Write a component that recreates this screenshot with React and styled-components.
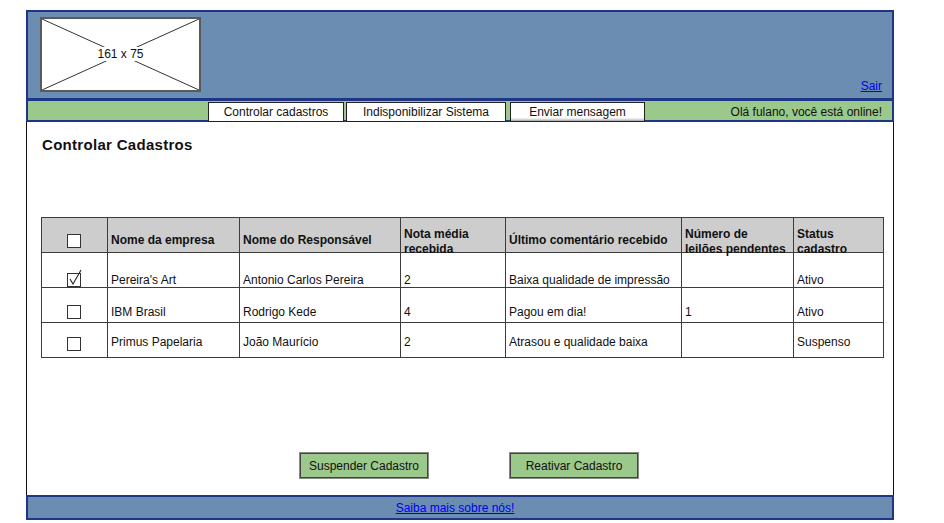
import React from 'react';
import styled, { createGlobalStyle } from 'styled-components';

const GlobalStyle = createGlobalStyle`
  body {
    margin: 0;
    background: #ffffff;
    font-family: 'Liberation Sans', Arial, sans-serif;
    font-size: 12px;
    color: #111;
  }
`;

const COLORS = {
  blue: '#6b8db2',
  navy: '#1d3686',
  green: '#9bc88b',
  gray: '#cdcdcd',
  line: '#3c3c3c',
  link: '#0000ee',
};

const Page = styled.div`
  width: 868px;
  margin: 10px 0 0 26px;
  display: flex;
  flex-direction: column;
`;

const Header = styled.header`
  height: 89px;
  box-sizing: border-box;
  background: ${COLORS.blue};
  border: 2px solid ${COLORS.navy};
  border-bottom-width: 1px;
  display: flex;
  justify-content: space-between;
  align-items: flex-start;
  padding: 5px 10px 0 12px;
`;

const LinkText = styled.a`
  color: ${COLORS.link};
  text-decoration: underline;
  cursor: pointer;
`;

const Logout = styled(LinkText)`
  align-self: flex-end;
  margin-bottom: 5px;
`;

const Placeholder = styled.div`
  position: relative;
  width: 161px;
  height: 75px;
  box-sizing: border-box;
  background: #fff;
  border: 2px solid #5a5a5a;
  display: flex;
  align-items: center;
  justify-content: center;
  svg {
    position: absolute;
    inset: 0;
  }
`;

const PlaceholderLabel = styled.span`
  position: relative;
  background: #fff;
  padding: 0 2px;
  margin-top: -2px;
`;

const Nav = styled.nav`
  height: 23px;
  box-sizing: border-box;
  background: ${COLORS.green};
  border: 2px solid ${COLORS.navy};
  display: flex;
  align-items: flex-end;
  padding-left: 180px;
  padding-right: 10px;
`;

const NavButton = styled.button`
  height: 20px;
  margin: 0 0 -2px ${({ $gap }) => $gap}px;
  box-sizing: border-box;
  width: ${({ $w }) => $w}px;
  background: #fff;
  border: 1px solid #222;
  font-family: inherit;
  font-size: 12px;
  color: #111;
  padding: 0;
  box-shadow: ${({ $active }) => ($active ? 'inset 0 -3px 3px -2px #888' : 'none')};
`;

const Greeting = styled.span`
  margin-left: auto;
  align-self: center;
  margin-top: 3px;
`;

const Content = styled.main`
  height: 373px;
  box-sizing: border-box;
  border-left: 1px solid #111;
  border-right: 1px solid #111;
  padding: 14px 10px 0 14px;
  display: flex;
  flex-direction: column;
`;

const Title = styled.h1`
  margin: 0 0 0 1px;
  font-size: 15px;
  font-weight: bold;
  letter-spacing: 0.3px;
`;

const Table = styled.table`
  margin-top: 64px;
  width: 842px;
  border-collapse: collapse;
  table-layout: fixed;
`;

const Th = styled.th`
  background: ${COLORS.gray};
  border: 1px solid ${COLORS.line};
  padding: 0;
  text-align: left;
  font-weight: bold;
  vertical-align: top;
`;

const ThInner = styled.div`
  height: 34px;
  box-sizing: border-box;
  display: flex;
  align-items: ${({ $two }) => ($two ? 'flex-start' : 'flex-end')};
  justify-content: ${({ $center }) => ($center ? 'center' : 'flex-start')};
  padding: ${({ $two }) => ($two ? '9px 3px 0' : '0 3px 4px')};
  line-height: 15px;
`;

const Td = styled.td`
  border: 1px solid ${COLORS.line};
  padding: 0;
  vertical-align: top;
`;

const TdInner = styled.div`
  height: 34px;
  box-sizing: border-box;
  padding: ${({ $top }) => $top}px 3px 0;
  line-height: 14px;
  display: flex;
  justify-content: ${({ $center }) => ($center ? 'center' : 'flex-start')};
`;

const Box = styled.span`
  position: relative;
  display: inline-block;
  width: 14px;
  height: 14px;
  box-sizing: border-box;
  border: 1px solid #333;
  background: #fff;
  margin-left: -1px;
  svg {
    position: absolute;
    left: 1px;
    top: -5px;
  }
`;

const Actions = styled.div`
  margin-top: 95px;
  display: flex;
  gap: 82px;
  padding-left: 259px;
`;

const ActionButton = styled.button`
  width: 128px;
  height: 25px;
  box-sizing: border-box;
  background: ${COLORS.green};
  border: 1px solid #444;
  box-shadow: 0 0 0 1px #888;
  font-family: inherit;
  font-size: 12px;
  color: #111;
`;

const Footer = styled.footer`
  height: 25px;
  box-sizing: border-box;
  background: ${COLORS.blue};
  border: 2px solid ${COLORS.navy};
  display: flex;
  align-items: center;
  justify-content: center;
  padding-right: 10px;
`;

const Check = ({ checked }) => (
  <Box>
    {checked && (
      <svg width="14" height="16" viewBox="0 0 14 16">
        <path d="M1 10 L4 15 L12 1" fill="none" stroke="#222" strokeWidth="1.1" />
      </svg>
    )}
  </Box>
);

const columns = [
  { label: [''], width: 66 },
  { label: ['Nome da empresa'], width: 132 },
  { label: ['Nome do Responsável'], width: 161 },
  { label: ['Nota média', 'recebida'], width: 105 },
  { label: ['Último comentário recebido'], width: 176 },
  { label: ['Número de', 'leilões pendentes'], width: 112 },
  { label: ['Status', 'cadastro'], width: 90 },
];

const rows = [
  { checked: true, top: 20, box: 20, cells: ["Pereira's Art", 'Antonio Carlos Pereira', '2', 'Baixa qualidade de impressão', '', 'Ativo'] },
  { checked: false, top: 17, box: 17, cells: ['IBM Brasil', 'Rodrigo Kede', '4', 'Pagou em dia!', '1', 'Ativo'] },
  { checked: false, top: 12, box: 14, cells: ['Primus Papelaria', 'João Maurício', '2', 'Atrasou e qualidade baixa', '', 'Suspenso'] },
];

export default function App() {
  return (
    <>
      <GlobalStyle />
      <Page>
        <Header>
          <Placeholder>
            <svg width="157" height="71" viewBox="0 0 157 71">
              <line x1="0" y1="0" x2="157" y2="71" stroke="#333" strokeWidth="1" />
              <line x1="157" y1="0" x2="0" y2="71" stroke="#333" strokeWidth="1" />
            </svg>
            <PlaceholderLabel>161 x 75</PlaceholderLabel>
          </Placeholder>
          <Logout>Sair</Logout>
        </Header>
        <Nav>
          <NavButton $gap={0} $w={136}>Controlar cadastros</NavButton>
          <NavButton $gap={2} $w={160}>Indisponibilizar Sistema</NavButton>
          <NavButton $gap={4} $w={135} $active>Enviar mensagem</NavButton>
          <Greeting>Olá fulano, você está online!</Greeting>
        </Nav>
        <Content>
          <Title>Controlar Cadastros</Title>
          <Table>
            <colgroup>
              {columns.map((c, i) => (
                <col key={i} style={{ width: c.width }} />
              ))}
            </colgroup>
            <thead>
              <tr>
                {columns.map((c, i) => (
                  <Th key={i}>
                    {i === 0 ? (
                      <ThInner $center>
                        <Check />
                      </ThInner>
                    ) : (
                      <ThInner $two={c.label.length > 1}>
                        <span>
                          {c.label.map((l, li) => (
                            <React.Fragment key={li}>
                              {li > 0 && <br />}
                              {l}
                            </React.Fragment>
                          ))}
                        </span>
                      </ThInner>
                    )}
                  </Th>
                ))}
              </tr>
            </thead>
            <tbody>
              {rows.map((r, ri) => (
                <tr key={ri}>
                  <Td>
                    <TdInner $top={r.box} $center>
                      <Check checked={r.checked} />
                    </TdInner>
                  </Td>
                  {r.cells.map((c, ci) => (
                    <Td key={ci}>
                      <TdInner $top={r.top}>{c}</TdInner>
                    </Td>
                  ))}
                </tr>
              ))}
            </tbody>
          </Table>
          <Actions>
            <ActionButton>Suspender Cadastro</ActionButton>
            <ActionButton>Reativar Cadastro</ActionButton>
          </Actions>
        </Content>
        <Footer>
          <LinkText>Saiba mais sobre nós!</LinkText>
        </Footer>
      </Page>
    </>
  );
}
